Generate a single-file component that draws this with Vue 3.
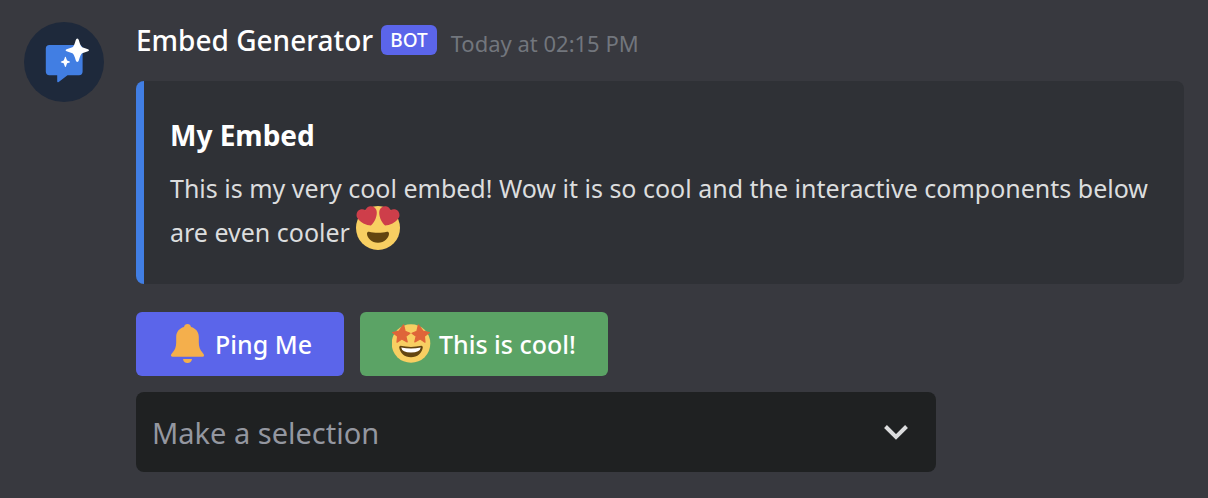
<script setup>
import { ref } from 'vue'

const choice = ref('')
</script>

<template>
  <article class="message">
    <svg class="avatar" viewBox="0 0 80 80" role="img" aria-label="Embed Generator avatar">
      <circle cx="40" cy="40" r="40" fill="#1e293b" />
      <path d="M25.500 23H55Q58.600 23 58.600 26.600V49.600Q58.600 53.300 55 53.300H43.500L34.700 60Q33.200 60.900 33.200 59.300V53.300H25.500Q21.800 53.300 21.800 49.600V26.600Q21.800 23 25.500 23Z" fill="#417ee3" />
      <path d="M53.300 16.600Q54.400 16.600 54.900 18.200Q56.500 24.200 58.200 25.200L64 27.200Q66 28.200 64 29.200L58.200 31.200Q56.500 32.200 54.900 38.200Q54.400 39.900 53.300 39.900T51.700 38.200Q50.100 32.200 48.400 31.200L42.600 29.200Q40.600 28.200 42.600 27.200L48.400 25.200Q50.100 24.200 51.700 18.200Q52.200 16.600 53.300 16.600Z" fill="#fff" />
      <path d="M41.400 34.800Q41.900 34.800 42.200 36.200L43.100 38.600L45.600 39.400Q46.700 39.900 45.600 40.400L43.100 41.200L42.200 43.700Q41.900 45 41.400 45T40.600 43.700L39.700 41.200L37.200 40.400Q36.100 39.900 37.200 39.400L39.700 38.600L40.600 36.200Q40.900 34.800 41.400 34.800Z" fill="#fff" />
    </svg>

    <div class="body">
      <header class="heading">
        <span class="name">Embed Generator</span>
        <span class="tag">BOT</span>
        <time class="time">Today at 02:15 PM</time>
      </header>

      <section class="embed">
        <h2 class="title">My Embed</h2>
        <p class="text">
          This is my very cool embed! Wow it is so cool and the interactive components below are even cooler
          <svg class="emoji" viewBox="0 0 36 36" role="img" aria-label="heart eyes">
            <circle cx="18" cy="18" r="18" fill="#f8cf62" />
            <path d="M16.650 3.281C15.791.85 13.126-.426 10.694.431c-1.476.52-2.521 1.711-2.928 3.104-1.191-.829-2.751-1.100-4.225-.58C1.111 3.813-.167 6.480.692 8.911c.122.344.284.663.472.958 1.951 3.582 7.588 6.100 11.001 6.131 2.637-2.167 5.446-7.665 4.718-11.677-.038-.348-.113-.698-.233-1.042zm2.700 0C20.209.85 22.875-.426 25.306.431c1.476.52 2.521 1.711 2.929 3.104 1.191-.829 2.751-1.100 4.225-.58 2.430.858 3.707 3.525 2.850 5.956-.123.344-.284.663-.473.958-1.951 3.582-7.588 6.100-11.002 6.131-2.637-2.167-5.445-7.665-4.717-11.677.037-.348.112-.698.232-1.042z" fill="#ce3e4a" />
            <path d="M18 21.849c-2.966 0-4.935-.346-7.369-.819-.557-.106-1.638 0-1.638 1.638 0 3.275 3.763 7.369 9.007 7.369s9.007-4.094 9.007-7.369c0-1.638-1.082-1.745-1.638-1.638-2.434.473-4.402.819-7.369.819" fill="#624510" />
          </svg>
        </p>
      </section>

      <div class="actions">
        <button class="button primary" type="button">
          <svg class="icon" viewBox="0 0 40 40" aria-hidden="true">
            <path d="M19.500 0C21.400 0 22.700 1.200 23 3.100C27.800 4.500 30.800 8 30.800 13V18.500C30.800 23 32.100 25.800 34.400 28.500C35.500 29.800 36 30.500 36 31.500C36 32.300 35.500 32.700 34.700 32.700H4.300C3.500 32.700 3 32.300 3 31.500C3 30.500 3.500 29.800 4.600 28.500C6.900 25.800 8.200 23 8.200 18.500V13C8.200 8 11.200 4.500 16 3.100C16.300 1.200 17.600 0 19.500 0ZM15 35H24C23.700 37.500 22 39 19.500 39C17 39 15.300 37.500 15 35Z" fill="#f4af4c" />
          </svg>
          Ping Me
        </button>
        <button class="button success" type="button">
          <svg class="icon" viewBox="0 0 40 40" aria-hidden="true">
            <circle cx="19" cy="19.500" r="19.300" fill="#f8cf62" />
            <g fill="#df6539" stroke="#df6539" stroke-width="1.200" stroke-linejoin="round">
              <path d="M11.600 .8L13.100 7.200L18 9.200L13.800 12.200L15.200 18L9.800 15L5 18.200L5.600 12.300L.6 8.600L7 7.200Z" />
              <path d="M26.400 .8L24.900 7.200L20 9.200L24.200 12.200L22.800 18L28.200 15L33 18.200L32.400 12.300L37.400 8.600L31 7.200Z" />
            </g>
            <path d="M8.500 21.800Q19 24 29.500 21.800Q30.800 21.800 30.800 23.500C30 29 25.500 33.300 19 33.300S8 29 7.200 23.500Q7.200 21.800 8.500 21.800Z" fill="#624510" />
            <path d="M9.200 23.500Q19 25.500 28.800 23.500Q28 28.500 19 28.500T9.200 23.500Z" fill="#fff" />
          </svg>
          This is cool!
        </button>
      </div>

      <div class="picker">
        <select v-model="choice" class="select" aria-label="Make a selection">
          <option value="">Make a selection</option>
        </select>
        <svg class="chevron" viewBox="0 0 24 16" aria-hidden="true">
          <path d="M1.500 2.500L12 13L22.500 2.500" fill="none" stroke="#dcddde" stroke-width="4" />
        </svg>
      </div>
    </div>
  </article>
</template>

<style>
body {
  background: #38393f;
}
</style>

<style scoped>
.message {
  display: flex;
  align-items: flex-start;
  gap: 32px;
  padding: 22px 24px 24px;
  font-family: "Noto Sans", "Open Sans", sans-serif;
  color: #dcddde;
}

.avatar {
  width: 80px;
  height: 80px;
  flex: none;
}

.body {
  flex: 1;
  min-width: 0;
}

.heading {
  display: flex;
  align-items: flex-start;
  height: 59px;
}

.name {
  font-size: 28px;
  line-height: 36px;
  font-weight: 500;
  color: #fff;
}

.tag {
  margin-top: 3px;
  margin-left: 8px;
  padding: 0 9px;
  border-radius: 6px;
  background: #5b65ea;
  color: #fff;
  font-size: 19px;
  line-height: 30px;
  font-weight: 500;
}

.time {
  margin-top: 6px;
  margin-left: 14px;
  font-size: 22px;
  line-height: 30px;
  color: #72767d;
}

.embed {
  padding: 32px 32px 30px 26px;
  border-left: 8px solid #417ee3;
  border-radius: 8px;
  background: #2f3136;
}

.title {
  margin: 0;
  font-size: 28px;
  line-height: 44px;
  font-weight: 700;
  color: #fff;
}

.text {
  margin: 9px 0 0;
  font-size: 25px;
  line-height: 44px;
}

.emoji {
  width: 44px;
  height: 44px;
  margin: -8px 0 0;
  vertical-align: -8px;
}

.actions {
  display: flex;
  gap: 16px;
  margin-top: 28px;
}

.button {
  display: flex;
  align-items: center;
  gap: 7px;
  height: 64px;
  padding: 0 32px;
  border: 0;
  border-radius: 6px;
  color: #fff;
  font-family: inherit;
  font-size: 25px;
  font-weight: 500;
}

.primary {
  background: #5b65ea;
}

.success {
  background: #5ba365;
}

.icon {
  width: 40px;
  height: 40px;
}

.picker {
  position: relative;
  max-width: 800px;
  margin-top: 16px;
}

.select {
  display: block;
  width: 100%;
  height: 80px;
  padding: 0 72px 0 16px;
  border: 0;
  border-radius: 8px;
  appearance: none;
  background: #1f2122;
  color: #9497a0;
  font-family: inherit;
  font-size: 29px;
}

.chevron {
  position: absolute;
  top: 32px;
  right: 28px;
  width: 24px;
  height: 16px;
  pointer-events: none;
}
</style>
